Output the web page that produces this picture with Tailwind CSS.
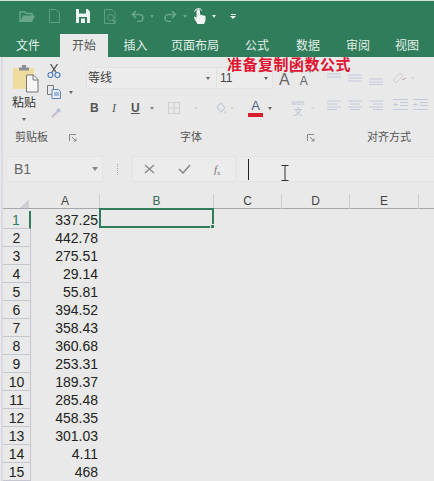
<!doctype html>
<html lang="zh"><head><meta charset="utf-8"><script src="https://cdn.jsdelivr.net/npm/@tailwindcss/browser@4"></script></head>
<body class="m-0">
<div class="relative w-[434px] h-[481px] overflow-hidden bg-[#e9e9e9] text-[#333] font-['Liberation_Sans','Noto_Sans_CJK_SC',sans-serif]">
  <!-- title bar -->
  <div class="h-[34px] bg-[#2f7d5b] border-t border-[#cfe0d8] flex items-center pl-[19px] pb-[3px]">
    <svg class="w-[17px] h-[14px] mr-[13px]" viewBox="0 0 17 14"><path d="M1 13V3h5l1 1.500h6V7" fill="none" stroke="#6aa68b" stroke-width="1.500"/><path d="M1 13l3-6.500h12L13 13z" fill="#6aa68b"/></svg>
    <svg class="w-[11px] h-[14px] mr-[16px]" viewBox="0 0 11 14"><path d="M.5.500h6.500l3.500 3.500v9.500H.5z" fill="none" stroke="#5f9f83"/></svg>
    <svg class="w-[14px] h-[14px] mr-[14px]" viewBox="0 0 14 14"><path d="M0 0h11.500L14 2.500V14H0z" fill="#eef5f1"/><path d="M3 0h7v4.500H3zM3 8h8v6H3z" fill="#2f7d5b"/><path d="M5 9.500h4v4.500H5z" fill="#eef5f1"/></svg>
    <svg class="w-[14px] h-[15px] mr-[13px]" viewBox="0 0 14 15"><path d="M.5.500H8L11 3.500V14.500H.5z" fill="none" stroke="#5f9f83"/><circle cx="6.500" cy="8.500" r="3" fill="none" stroke="#5f9f83"/><path d="M8.500 11l3 3" stroke="#5f9f83" stroke-width="1.500"/></svg>
    <svg class="w-[14px] h-[12px] mr-[5px]" viewBox="0 0 14 12"><path d="M5 1L1.500 4.500 5 8M2 4.500h6.500a3.500 3.500 0 0 1 0 7H6" fill="none" stroke="#6aa68b" stroke-width="1.600"/></svg>
    <span class="w-0 h-0 border-x-[2.500px] border-x-transparent border-t-[3px] border-t-[#6aa68b] mr-[9px]"></span>
    <svg class="w-[14px] h-[12px] mr-[6px]" viewBox="0 0 14 12"><path d="M9 1l3.500 3.500L9 8M12 4.500H5.500a3.500 3.500 0 0 0 0 7H8" fill="none" stroke="#6aa68b" stroke-width="1.600"/></svg>
    <span class="w-0 h-0 border-x-[2.500px] border-x-transparent border-t-[3px] border-t-[#6aa68b] mr-[6px]"></span>
    <svg class="w-[13px] h-[17px] mr-[6px]" viewBox="0 0 13 17"><path d="M3.500 3v6.500L1 8.500 1.500 11 4.500 16h6.500l1.500-3.500V8L7 6.500V3a1.700 1.700 0 0 0-3.500 0z" fill="#eef5f1"/><path d="M1.500 3.500a4 3.500 0 0 1 7.500-1" fill="none" stroke="#eef5f1"/></svg>
    <span class="w-0 h-0 border-x-[2.500px] border-x-transparent border-t-[3px] border-t-[#dcebe4] mr-[14px]"></span>
    <span class="flex flex-col items-center gap-[1px]"><span class="w-[5px] h-[1px] bg-[#eef5f1]"></span><span class="w-0 h-0 border-x-[3px] border-x-transparent border-t-[3px] border-t-[#eef5f1]"></span></span>
  </div>
  <!-- tabs -->
  <div class="h-[23px] bg-[#2f7d5b] flex items-stretch text-[12px] leading-[25px] text-[#e3efe9]">
    <span class="w-[60px] pl-[16px]">文件</span>
    <span class="w-[48px] text-center bg-[#e9e9e9] text-[#555] h-[23px]">开始</span>
    <span class="w-[55px] text-center">插入</span>
    <span class="w-[72px] pl-[8px]">页面布局</span>
    <span class="w-[52px] pl-[10px]">公式</span>
    <span class="w-[50px] pl-[9px]">数据</span>
    <span class="w-[50px] pl-[9px]">审阅</span>
    <span class="pl-[8px]">视图</span>
  </div>
  <div class="border-l-2 border-[#d9dbe3] ml-[1px]">
  <!-- ribbon -->
  <div class="h-[90px] flex bg-[#e9e9e9]">
    <div class="w-[73px] flex flex-col">
      <div class="h-[66px] flex pl-[9px] pt-[7px]">
        <div class="w-[35px] flex flex-col items-start">
          <svg class="w-[27px] h-[29px]" viewBox="0 0 27 29"><path d="M1 4h21v21H1z" fill="#efdd9f"/><path d="M7 3.500h10v3H7z M10 1h4v3h-4z" fill="#8d8d96"/><path d="M14.500 11h7l4.500 4.500V28H14.500z" fill="#f6f6f6" stroke="#777"/><path d="M21 11v5h5" fill="none" stroke="#777"/></svg>
          <span class="text-[12px] leading-[16px] text-[#333] mt-[2px]">粘贴</span>
          <span class="w-0 h-0 border-x-[2.500px] border-x-transparent border-t-[3px] border-t-[#666] ml-[10px] mt-[7px]"></span>
        </div>
        <div class="flex flex-col">
          <svg class="w-[14px] h-[14px]" viewBox="0 0 14 14"><path d="M3.500 0l6 9M10.500 0l-6 9" stroke="#555" stroke-width="1.300"/><circle cx="3.500" cy="11" r="2.500" fill="none" stroke="#4f7fc0" stroke-width="1.200"/><circle cx="10.500" cy="11" r="2.500" fill="none" stroke="#4f7fc0" stroke-width="1.200"/></svg>
          <div class="flex items-center gap-[7px] mt-[7px]">
            <svg class="w-[15px] h-[14px]" viewBox="0 0 15 14"><path d="M.5.500h6v9h-6z" fill="none" stroke="#777"/><path d="M5 4.500h6.500l2 2v7H5z" fill="#eef" stroke="#5a86bd"/><path d="M7 8h5M7 10h5" stroke="#5a86bd"/></svg>
            <span class="w-0 h-0 border-x-[2.500px] border-x-transparent border-t-[3px] border-t-[#666]"></span>
          </div>
          <svg class="w-[10px] h-[10px] ml-[4px] mt-[9px]" viewBox="0 0 10 10"><path d="M1 9l5-5" stroke="#c9b9cf" stroke-width="2"/><circle cx="7.500" cy="2.500" r="2" fill="#b7bdd8"/></svg>
        </div>
      </div>
      <div class="flex-1 flex items-center pl-[12px] pt-[5px] gap-[21px] text-[11px] text-[#555] whitespace-nowrap"><span>剪贴板</span><svg class="w-[8px] h-[8px] shrink-0" viewBox="0 0 8 8"><path d="M.5 7V.5H7M3 3l4 4M7 4.500V7H4.500" fill="none" stroke="#888"/></svg></div>
    </div>
    <div class="w-[240px] flex flex-col pl-[10px]">
      <div class="h-[66px] pt-[10px]">
        <div class="flex h-[22px]">
          <div class="w-[131px] flex items-center justify-between pl-[1px] pr-[6px] bg-[#ececec] border border-[#e2e2e2] text-[12px] text-[#444]">等线<span class="w-0 h-0 border-x-[2.500px] border-x-transparent border-t-[3px] border-t-[#666]"></span></div>
          <div class="w-[57px] -ml-[1px] flex items-center justify-between pl-[3px] pr-[4px] bg-[#ececec] border border-[#e2e2e2] text-[12px] text-[#444]">11<span class="w-0 h-0 border-x-[2.500px] border-x-transparent border-t-[3px] border-t-[#666]"></span></div>
          <span class="ml-[6px] text-[16px] leading-[26px] text-[#666]">A</span><span class="w-0 h-0 mt-[3px] border-x-[2px] border-x-transparent border-b-[3px] border-b-[#888]"></span>
          <span class="ml-[6px] text-[12px] leading-[28px] text-[#666]">A</span><span class="w-0 h-0 mt-[3px] border-x-[2px] border-x-transparent border-t-[3px] border-t-[#888]"></span>
        </div>
        <div class="flex items-center mt-[10px] h-[18px] pl-[4px]">
          <span class="w-[11px] text-[12px] font-bold text-[#555]">B</span>
          <span class="w-[11px] ml-[11px] text-[12px] italic font-['Liberation_Serif'] text-[#555]">I</span>
          <span class="w-[11px] ml-[8px] text-[12px] font-bold underline text-[#555]">U</span>
          <span class="ml-[8px] w-0 h-0 border-x-[2.500px] border-x-transparent border-t-[3px] border-t-[#888]"></span>
          <svg class="ml-[14px] w-[12px] h-[12px]" viewBox="0 0 12 12"><path d="M.5.500h11v11H.5zM6 0v12M0 6h12" fill="none" stroke="#cfcfcf"/></svg>
          <span class="ml-[14px] w-0 h-0 border-x-[2.500px] border-x-transparent border-t-[3px] border-t-[#d5d5d5]"></span>
          <svg class="ml-[16px] w-[13px] h-[13px]" viewBox="0 0 13 13"><path d="M3 5l4-4 4 5-4 4z" fill="none" stroke="#c6cbdc" stroke-width="1.200"/><circle cx="11.500" cy="10.500" r="1.200" fill="#d2d2d2"/></svg>
          <span class="ml-[3px] w-0 h-0 border-x-[2px] border-x-transparent border-t-[3px] border-t-[#d5d5d5]"></span>
          <div class="ml-[14px] flex flex-col items-center w-[15px]"><span class="text-[13px] leading-[14px] text-[#4a6587]">A</span><span class="w-[15px] h-[4px] bg-[#d81e2a]"></span></div>
          <span class="ml-[5px] w-0 h-0 border-x-[2.500px] border-x-transparent border-t-[3px] border-t-[#666]"></span>
          <div class="ml-[18px] w-[16px] flex flex-col items-center text-[#bcc2d4]"><span class="text-[7px] leading-[8px]">wén</span><span class="text-[9px] leading-[10px]">文</span></div>
          <span class="ml-[5px] w-0 h-0 border-x-[2px] border-x-transparent border-t-[3px] border-t-[#d5d5d5]"></span>
        </div>
      </div>
      <div class="flex-1 flex items-center pt-[5px] text-[11px] text-[#555]"><span class="ml-[94px]">字体</span><svg class="ml-[105px] w-[8px] h-[8px]" viewBox="0 0 8 8"><path d="M.5 7V.5H7M3 3l4 4M7 4.500V7H4.500" fill="none" stroke="#888"/></svg></div>
    </div>
    <div class="flex-1 flex flex-col pl-[11px]">
      <div class="h-[66px] pt-[14px] flex flex-col gap-[14px]">
        <div class="flex items-center gap-[7px]">
          <svg class="w-[14px] h-[10px]" viewBox="0 0 14 10"><path d="M0 1h14M0 4h14" stroke="#c5cadb"/></svg>
          <svg class="w-[14px] h-[10px]" viewBox="0 0 14 10"><path d="M0 2h14M0 5h14M0 8h14" stroke="#c5cadb"/></svg>
          <svg class="w-[14px] h-[10px] mt-[4px]" viewBox="0 0 14 10"><path d="M0 4h14M0 7h14M0 9.500h14" stroke="#c5cadb"/></svg>
          <svg class="w-[15px] h-[14px] ml-[2px]" viewBox="0 0 15 14"><path d="M1 9L8 2l3 3-7 7z" fill="none" stroke="#cfcfd8"/><path d="M10 9l4-2" stroke="#c0a6a6"/></svg>
          <span class="w-0 h-0 border-x-[2px] border-x-transparent border-t-[3px] border-t-[#d5d5d5] -ml-[3px]"></span>
        </div>
        <div class="flex items-center gap-[7px]">
          <svg class="w-[14px] h-[10px]" viewBox="0 0 14 10"><path d="M0 1h14M0 4h10M0 7h14M0 9.500h10" stroke="#c5cadb"/></svg>
          <svg class="w-[14px] h-[10px]" viewBox="0 0 14 10"><path d="M0 1h14M2 4h10M0 7h14M2 9.500h10" stroke="#c5cadb"/></svg>
          <svg class="w-[14px] h-[10px]" viewBox="0 0 14 10"><path d="M0 1h14M4 4h10M0 7h14M4 9.500h10" stroke="#c5cadb"/></svg>
          <svg class="w-[15px] h-[11px] ml-[3px]" viewBox="0 0 15 11"><path d="M0 .500h15M7 3.500h8M7 6.500h8M0 10.500h15M5 5.500H1l2-2M1 5.500l2 2" fill="none" stroke="#c5cadb"/></svg>
          <svg class="w-[15px] h-[11px] -ml-[2px]" viewBox="0 0 15 11"><path d="M0 .500h15M7 3.500h8M7 6.500h8M0 10.500h15M0 5.500h4l-2-2M4 5.500l-2 2" fill="none" stroke="#c5cadb"/></svg>
        </div>
      </div>
      <div class="flex-1 flex items-center pt-[5px] pl-[40px] text-[11px] whitespace-nowrap text-[#555]">对齐方式</div>
    </div>
  </div>
  <!-- formula bar -->
  <div class="h-[47px] flex items-start bg-[#e9e9e9] pt-[9px]">
    <div class="w-[97px] h-[26px] ml-[3px] flex items-center justify-between pl-[7px] pr-[4px] bg-[#ececec] border border-[#e3e3e3] text-[14px] text-[#666]">B1<span class="w-0 h-0 border-x-[3px] border-x-transparent border-t-[4px] border-t-[#888]"></span></div>
    <div class="w-[1px] h-[11px] mt-[8px] mx-[14px] border-l border-dotted border-[#aaa]"></div>
    <div class="w-[104px] h-[26px] flex items-center bg-[#ececec] border border-[#e3e3e3] pl-[11px] gap-[23px]">
      <svg class="w-[11px] h-[10px]" viewBox="0 0 11 10"><path d="M1 1l9 8M10 1l-9 8" stroke="#888" stroke-width="1.300"/></svg>
      <svg class="w-[13px] h-[10px]" viewBox="0 0 13 10"><path d="M1 5l4 4 7-8" fill="none" stroke="#888" stroke-width="1.500"/></svg>
      <span class="text-[11px] italic font-['Liberation_Serif'] text-[#777]">f<sub class="text-[7px] not-italic">x</sub></span>
    </div>
    <div class="flex-1 h-[26px] ml-[4px] bg-[#ececec] border-y border-[#e3e3e3] flex items-center pl-[8px]">
      <span class="w-[1px] h-[21px] bg-[#222]"></span>
    </div>
  </div>
  <!-- sheet -->
  <div class="text-[#222]">
    <div class="grid grid-cols-[28px_69px_114px_68px_68px_69px_1fr] h-[15px] text-[12px] leading-[15px] text-center text-[#444] border-b border-[#a6a6ad]">
      <div class="relative"><span class="absolute right-[2px] bottom-[1px] w-0 h-0 border-l-[9px] border-l-transparent border-b-[9px] border-b-[#cfcfd6]"></span></div>
      <div class="border-r border-[#cfcfcf]">A</div>
      <div class="border-r border-[#cfcfcf] text-[#3a6a55]">B</div>
      <div class="border-r border-[#cfcfcf]">C</div>
      <div class="border-r border-[#cfcfcf]">D</div>
      <div class="border-r border-[#cfcfcf]">E</div>
      <div></div>
    </div>
    <div class="relative grid grid-cols-[28px_69px] auto-rows-[18px] text-[14px] leading-[19px] pt-[2px]">
      <div class="border-r-2 border-[#2f7d5b] border-b border-b-[#c6c6d0] text-center text-[#2f7d5b]">1</div><div class="text-right pr-[2px]">337.25</div>
      <div class="border-r border-b border-[#c6c6d0] text-center">2</div><div class="text-right pr-[2px]">442.78</div>
      <div class="border-r border-b border-[#c6c6d0] text-center">3</div><div class="text-right pr-[2px]">275.51</div>
      <div class="border-r border-b border-[#c6c6d0] text-center">4</div><div class="text-right pr-[2px]">29.14</div>
      <div class="border-r border-b border-[#c6c6d0] text-center">5</div><div class="text-right pr-[2px]">55.81</div>
      <div class="border-r border-b border-[#c6c6d0] text-center">6</div><div class="text-right pr-[2px]">394.52</div>
      <div class="border-r border-b border-[#c6c6d0] text-center">7</div><div class="text-right pr-[2px]">358.43</div>
      <div class="border-r border-b border-[#c6c6d0] text-center">8</div><div class="text-right pr-[2px]">360.68</div>
      <div class="border-r border-b border-[#c6c6d0] text-center">9</div><div class="text-right pr-[2px]">253.31</div>
      <div class="border-r border-b border-[#c6c6d0] text-center">10</div><div class="text-right pr-[2px]">189.37</div>
      <div class="border-r border-b border-[#c6c6d0] text-center">11</div><div class="text-right pr-[2px]">285.48</div>
      <div class="border-r border-b border-[#c6c6d0] text-center">12</div><div class="text-right pr-[2px]">458.35</div>
      <div class="border-r border-b border-[#c6c6d0] text-center">13</div><div class="text-right pr-[2px]">301.03</div>
      <div class="border-r border-b border-[#c6c6d0] text-center">14</div><div class="text-right pr-[2px]">4.11</div>
      <div class="border-r border-b border-[#c6c6d0] text-center">15</div><div class="text-right pr-[2px]">468</div>
      <div class="absolute left-[96px] -top-[1px] w-[115px] h-[20px] border-2 border-[#2f7d5b]"><span class="absolute -right-[3px] -bottom-[3px] w-[5px] h-[5px] bg-[#2f7d5b] border border-[#e9e9e9]"></span></div>
    </div>
  </div>
  </div>
  <!-- overlays -->
  <svg class="absolute left-[281px] top-[165px] w-[8px] h-[16px]" viewBox="0 0 8 16"><path d="M.5.500h7M.5 15.500h7M4 .500v15" fill="none" stroke="#333"/></svg>
  <div class="absolute left-[227px] top-[55px] text-[15px] leading-[18px] tracking-[0.5px] font-bold text-[#e01330] whitespace-nowrap font-['Noto_Sans_CJK_SC',sans-serif]">准备复制函数公式</div>
</div>
</body></html>
